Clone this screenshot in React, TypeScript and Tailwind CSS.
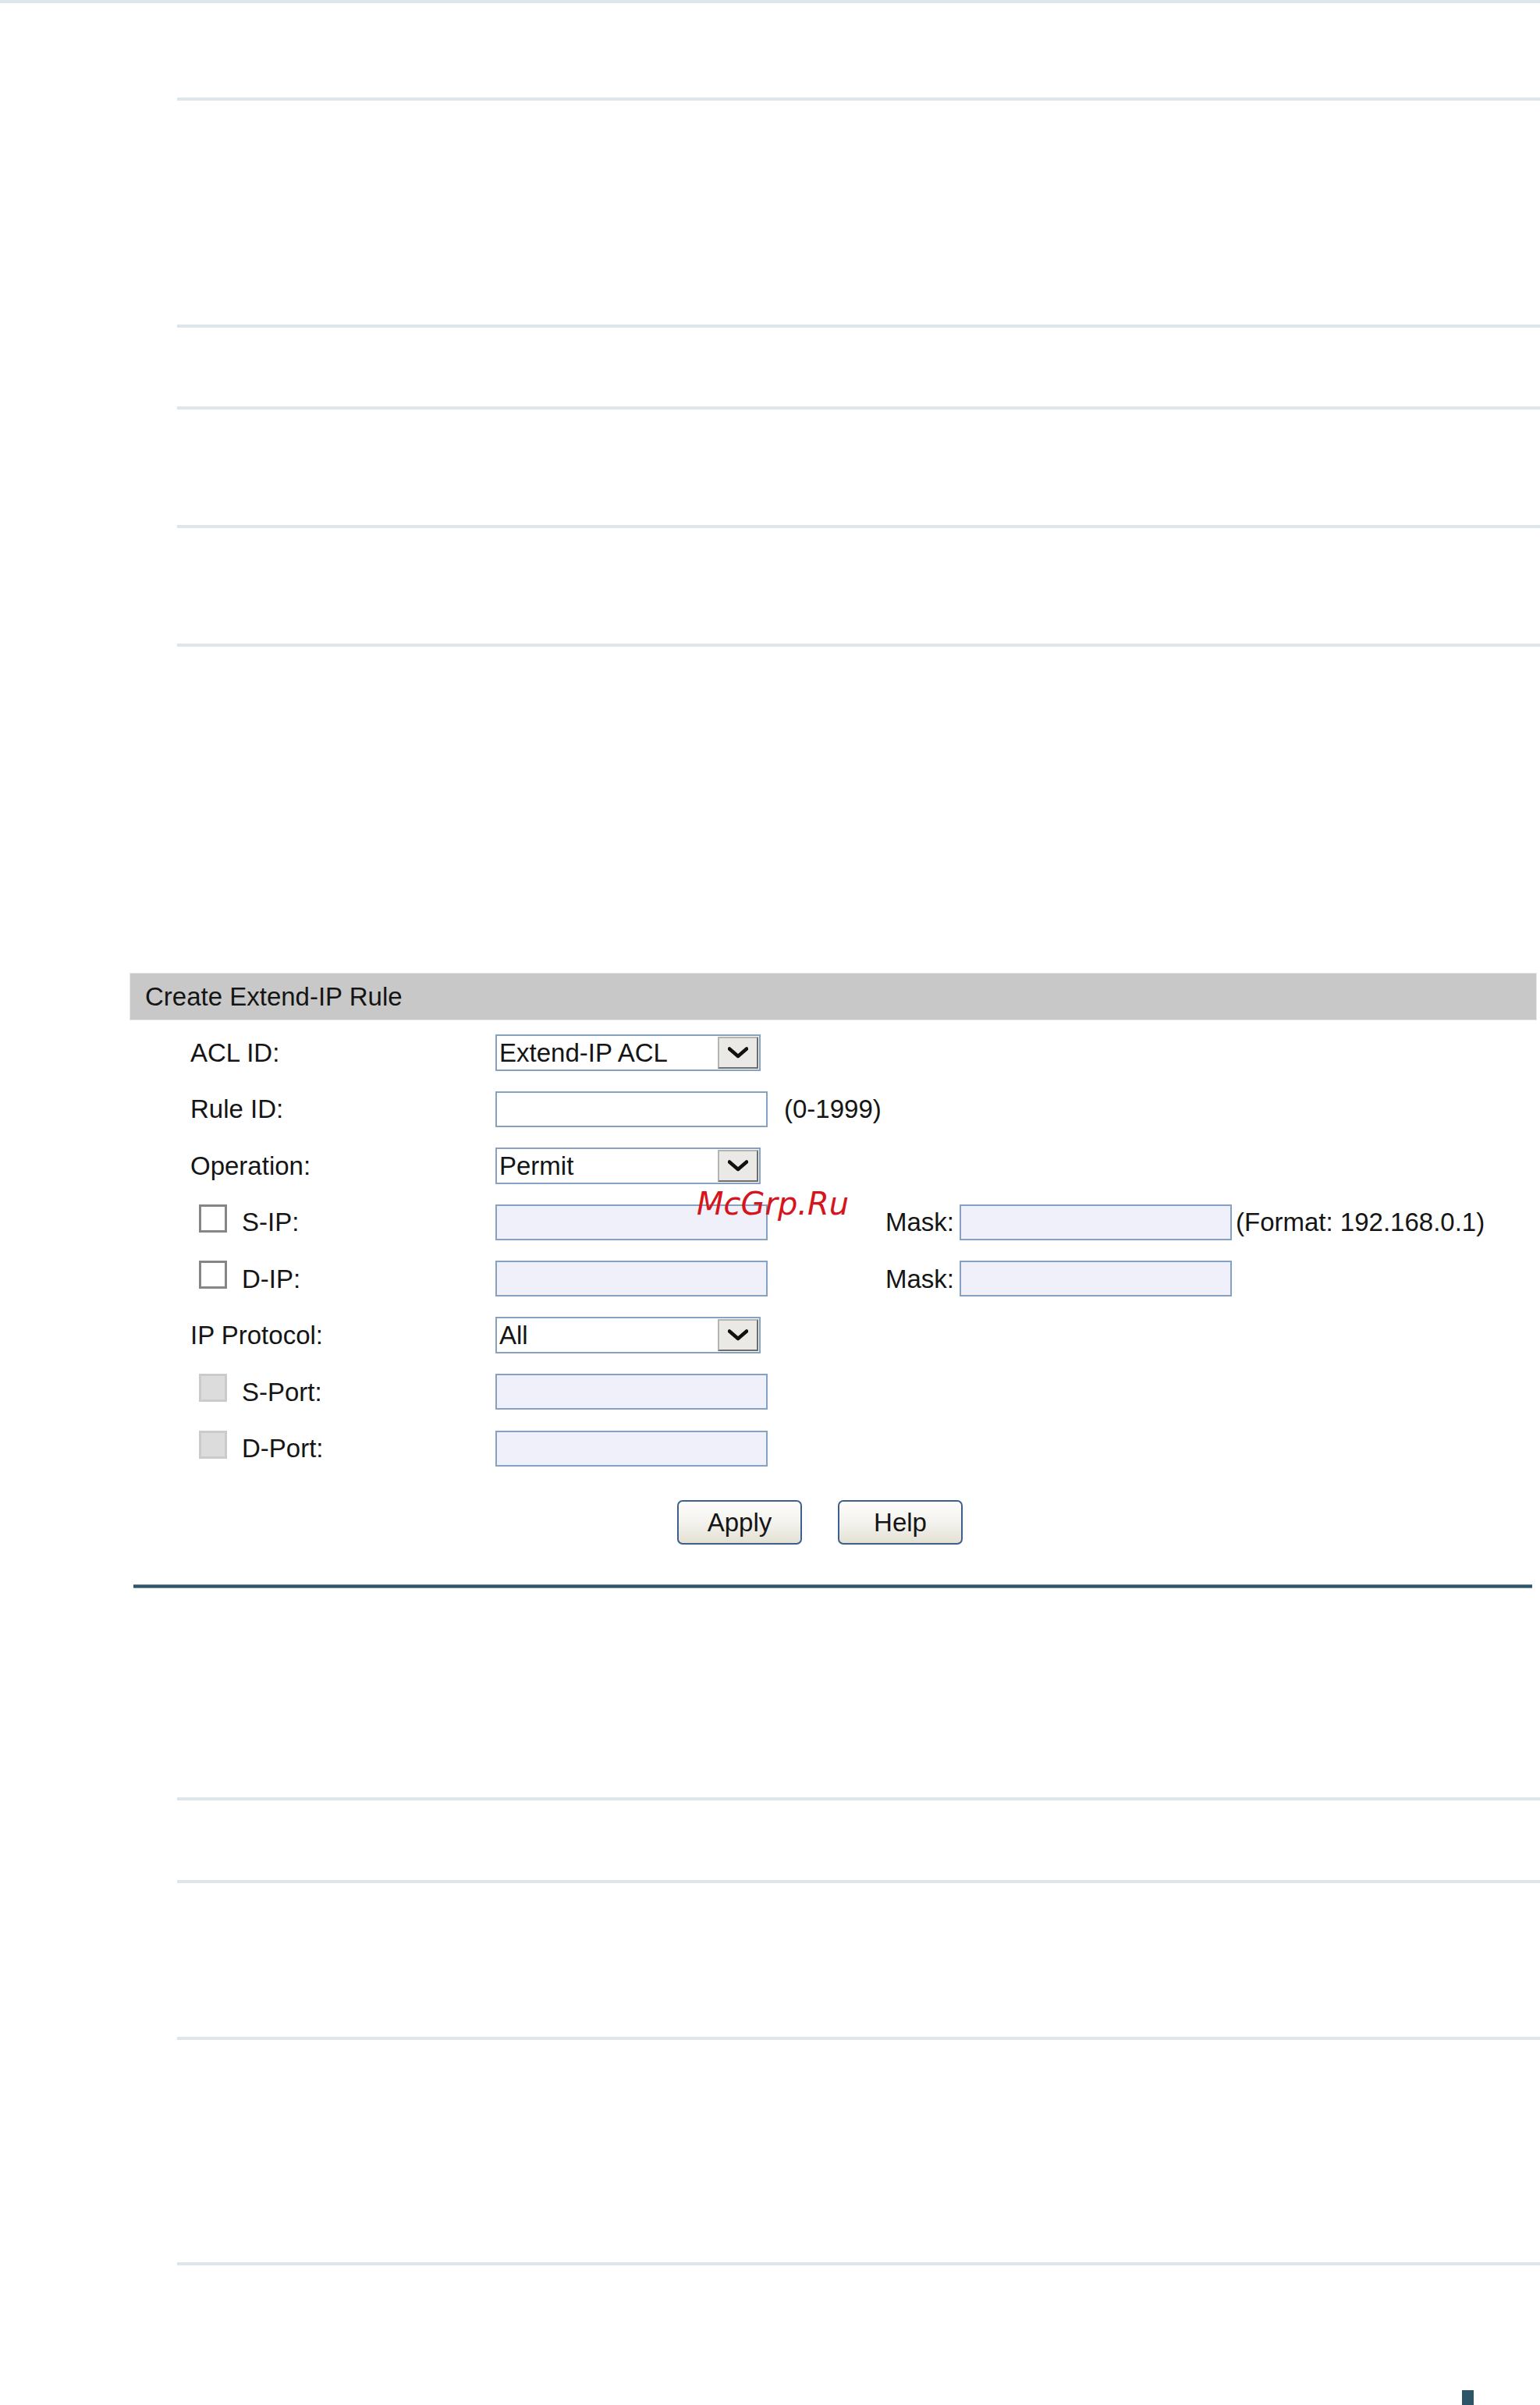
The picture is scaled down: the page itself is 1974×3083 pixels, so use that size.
import React from "react";

const font = "font-['Liberation_Sans',Arial,Helvetica,sans-serif]";

function Rule({ className = "" }: { className?: string }) {
	return <div className={`h-[4px] bg-[#dce6eb] ${className}`} />;
}

function Chevron() {
	return (
		<svg width="26" height="15" viewBox="0 0 26 15" fill="none">
			<path d="M2 2.5 L13 12 L24 2.5" stroke="#111" strokeWidth="4.5" strokeLinecap="round" strokeLinejoin="round" />
		</svg>
	);
}

function Select({ value }: { value: string }) {
	return (
		<div className="w-[340px] h-[47px] border-2 border-[#86a2c2] bg-white flex items-stretch">
			<div className="flex-1 flex items-center pl-[3px] leading-none">{value}</div>
			<div className="w-[52px] my-[1px] mr-[1px] bg-[#ebe9e6] border-2 border-[#b4b4b4] border-r-[#6e6e6e] border-b-[#6e6e6e] flex items-center justify-center">
				<Chevron />
			</div>
		</div>
	);
}

function Input({ disabled = false }: { disabled?: boolean }) {
	return (
		<div
			className={`w-[349px] h-[46px] border-2 border-[#86a2c2] ${disabled ? "bg-[#eff0f9]" : "bg-white"}`}
		/>
	);
}

function Box({ disabled = false }: { disabled?: boolean }) {
	return (
		<div
			className={`w-[36px] h-[36px] mb-[10px] border-[3px] ${
				disabled ? "bg-[#dcdcdc] border-[#cbcbcb]" : "bg-white border-[#868686]"
			}`}
		/>
	);
}

function Row({
	label,
	check,
	children,
}: {
	label: string;
	check?: "on" | "off";
	children: React.ReactNode;
}) {
	return (
		<div className="h-[72.5px] flex items-center">
			<div className={`w-[469px] flex items-center ${check ? "pl-[89px]" : "pl-[78px]"}`}>
				{check && <Box disabled={check === "off"} />}
				<span className={`leading-none ${check ? "ml-[19px]" : ""}`}>{label}</span>
			</div>
			{children}
		</div>
	);
}

function Button({ label, className = "" }: { label: string; className?: string }) {
	return (
		<button
			className={`w-[160px] h-[57px] rounded-[7px] border-2 border-[#3d5f8e] bg-gradient-to-b from-[#fdfdfb] via-[#f3f2ee] to-[#e4e1d3] text-[33px] leading-none text-[#151515] ${font} ${className}`}
		>
			{label}
		</button>
	);
}

export default function App() {
	return (
		<div className={`relative w-[1974px] h-[3083px] bg-white text-[#151515] text-[33px] ${font}`}>
			<Rule />
			<Rule className="ml-[227px] mt-[121px]" />
			<Rule className="ml-[227px] mt-[287px]" />
			<Rule className="ml-[227px] mt-[101px]" />
			<Rule className="ml-[227px] mt-[148px]" />
			<Rule className="ml-[227px] mt-[148px]" />

			<section className="mt-[418px] ml-[166px] w-[1804px]">
				<div className="h-[61px] bg-[#c8c8c8] border border-[#e6e6e6] flex items-center pl-[19px] leading-none">
					Create Extend-IP Rule
				</div>
				<div className="pt-[5px]">
					<Row label="ACL ID:">
						<Select value="Extend-IP ACL" />
					</Row>
					<Row label="Rule ID:">
						<Input />
						<span className="ml-[21px] leading-none">(0-1999)</span>
					</Row>
					<Row label="Operation:">
						<Select value="Permit" />
					</Row>
					<Row label="S-IP:" check="on">
						<Input disabled />
						<span className="ml-[151px] leading-none">Mask:</span>
						<div className="ml-[7px]">
							<Input disabled />
						</div>
						<span className="ml-[5px] leading-none">(Format: 192.168.0.1)</span>
					</Row>
					<Row label="D-IP:" check="on">
						<Input disabled />
						<span className="ml-[151px] leading-none">Mask:</span>
						<div className="ml-[7px]">
							<Input disabled />
						</div>
					</Row>
					<Row label="IP Protocol:">
						<Select value="All" />
					</Row>
					<Row label="S-Port:" check="off">
						<Input disabled />
					</Row>
					<Row label="D-Port:" check="off">
						<Input disabled />
					</Row>
				</div>
				<div className="mt-[30px] pl-[702px] flex">
					<Button label="Apply" />
					<Button label="Help" className="ml-[46px]" />
				</div>
			</section>

			<div className="ml-[171px] mt-[51px] w-[1793px] h-[5px] bg-[#2e5569] border-y border-[#6f8c9a]" />

			<Rule className="ml-[227px] mt-[268px]" />
			<Rule className="ml-[227px] mt-[102px]" />
			<Rule className="ml-[227px] mt-[197px]" />
			<Rule className="ml-[227px] mt-[285px]" />

			<div className="ml-[1874px] mt-[160px] w-[15px] h-[19px] bg-[#2c5568]" />

			<div className="absolute left-[893px] top-[1523px] text-[40px] leading-none italic text-[#d6141c] font-['DejaVu_Sans',sans-serif]">
				McGrp.Ru
			</div>
		</div>
	);
}
